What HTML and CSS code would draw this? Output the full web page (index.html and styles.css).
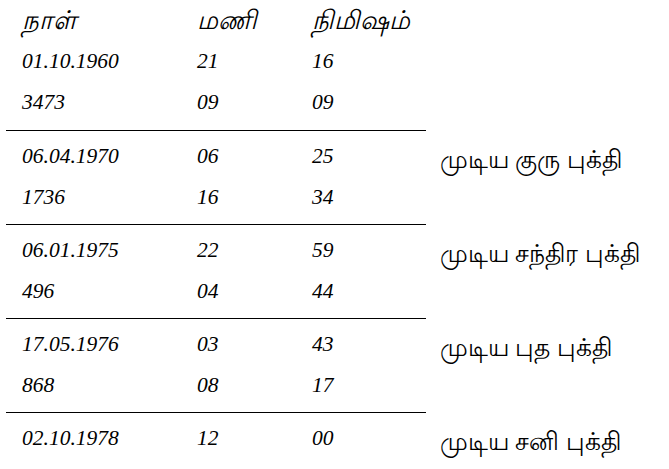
FILE: index.html
```html
<!DOCTYPE html>
<html lang="en">
<head>
<meta charset="utf-8">
<title>புக்தி</title>
<link rel="stylesheet" href="styles.css">
</head>
<body>
<div class="sheet">
  <div class="group first">
    <div class="cells">
      <div class="row head"><span lang="ta">நாள்</span><span lang="ta">மணி</span><span lang="ta">நிமிஷம்</span></div>
      <div class="row"><span>01.10.1960</span><span>21</span><span>16</span></div>
      <div class="row"><span>3473</span><span>09</span><span>09</span></div>
    </div>
  </div>
  <div class="group">
    <div class="cells">
      <div class="row"><span>06.04.1970</span><span>06</span><span>25</span></div>
      <div class="row"><span>1736</span><span>16</span><span>34</span></div>
    </div>
    <div class="note" lang="ta">முடிய குரு புக்தி</div>
  </div>
  <div class="group">
    <div class="cells">
      <div class="row"><span>06.01.1975</span><span>22</span><span>59</span></div>
      <div class="row"><span>496</span><span>04</span><span>44</span></div>
    </div>
    <div class="note" lang="ta">முடிய சந்திர புக்தி</div>
  </div>
  <div class="group">
    <div class="cells">
      <div class="row"><span>17.05.1976</span><span>03</span><span>43</span></div>
      <div class="row"><span>868</span><span>08</span><span>17</span></div>
    </div>
    <div class="note" lang="ta">முடிய புத புக்தி</div>
  </div>
  <div class="group">
    <div class="cells">
      <div class="row"><span>02.10.1978</span><span>12</span><span>00</span></div>
    </div>
    <div class="note" lang="ta">முடிய சனி புக்தி</div>
  </div>
</div>
</body>
</html>
```
FILE: styles.css
```css
html, body {
  margin: 0;
  padding: 0;
  background: #fff;
  color: #000;
}
.sheet {
  width: 669px;
  font-family: "Liberation Serif", "Times New Roman", serif;
  font-size: 21.5px;
  font-style: italic;
}
.group {
  display: flex;
  align-items: flex-start;
}
.cells {
  width: 420px;
  margin-left: 6px;
  border-top: 1px solid #000;
  padding: 5px 0 6px;
}
.group.first .cells {
  border-top: none;
  padding: 0 0 7px;
}
.row {
  display: grid;
  grid-template-columns: 175px 115px auto;
  padding-left: 16px;
  height: 41px;
  line-height: 41px;
}
.head span {
  font-size: 26px;
}
.note {
  margin-left: 14px;
  padding-top: 9px;
  font-style: normal;
  font-size: 25px;
  line-height: 41px;
  white-space: nowrap;
}
```
